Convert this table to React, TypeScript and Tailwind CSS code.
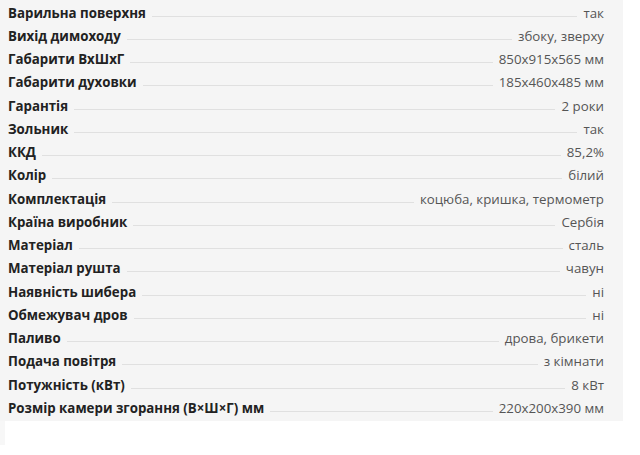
const specs: [string, string][] = [
  ['Варильна поверхня', 'так'],
  ['Вихід димоходу', 'збоку, зверху'],
  ['Габарити ВхШхГ', '850x915x565 мм'],
  ['Габарити духовки', '185x460x485 мм'],
  ['Гарантія', '2 роки'],
  ['Зольник', 'так'],
  ['ККД', '85,2%'],
  ['Колір', 'білий'],
  ['Комплектація', 'коцюба, кришка, термометр'],
  ['Країна виробник', 'Сербія'],
  ['Матеріал', 'сталь'],
  ['Матеріал рушта', 'чавун'],
  ['Наявність шибера', 'ні'],
  ['Обмежувач дров', 'ні'],
  ['Паливо', 'дрова, брикети'],
  ['Подача повітря', 'з кімнати'],
  ['Потужність (кВт)', '8 кВт'],
  ['Розмір камери згорання (В×Ш×Г) мм', '220x200x390 мм'],
];

export default function App() {
  return (
    <div className="w-[640px] h-[455px] bg-white font-['Open_Sans',sans-serif]">
      <div className="w-[623px] bg-[#f5f5f5] pt-[1.5px] pb-[1px] pl-[8px] pr-[19px]">
        {specs.map(([label, value]) => (
          <div key={label} className="flex items-baseline h-[23.25px] leading-[23.25px]">
            <span className="text-[13.3px] font-bold text-[#222]">{label}</span>
            <span className="flex-1 mx-[6px] border-b border-[#e0e0e0] -translate-y-px" />
            <span className="text-[13.3px] text-[#555]">{value}</span>
          </div>
        ))}
      </div>
      <div className="w-[5px] h-[24px] bg-[#f7f7f7]" />
    </div>
  );
}
